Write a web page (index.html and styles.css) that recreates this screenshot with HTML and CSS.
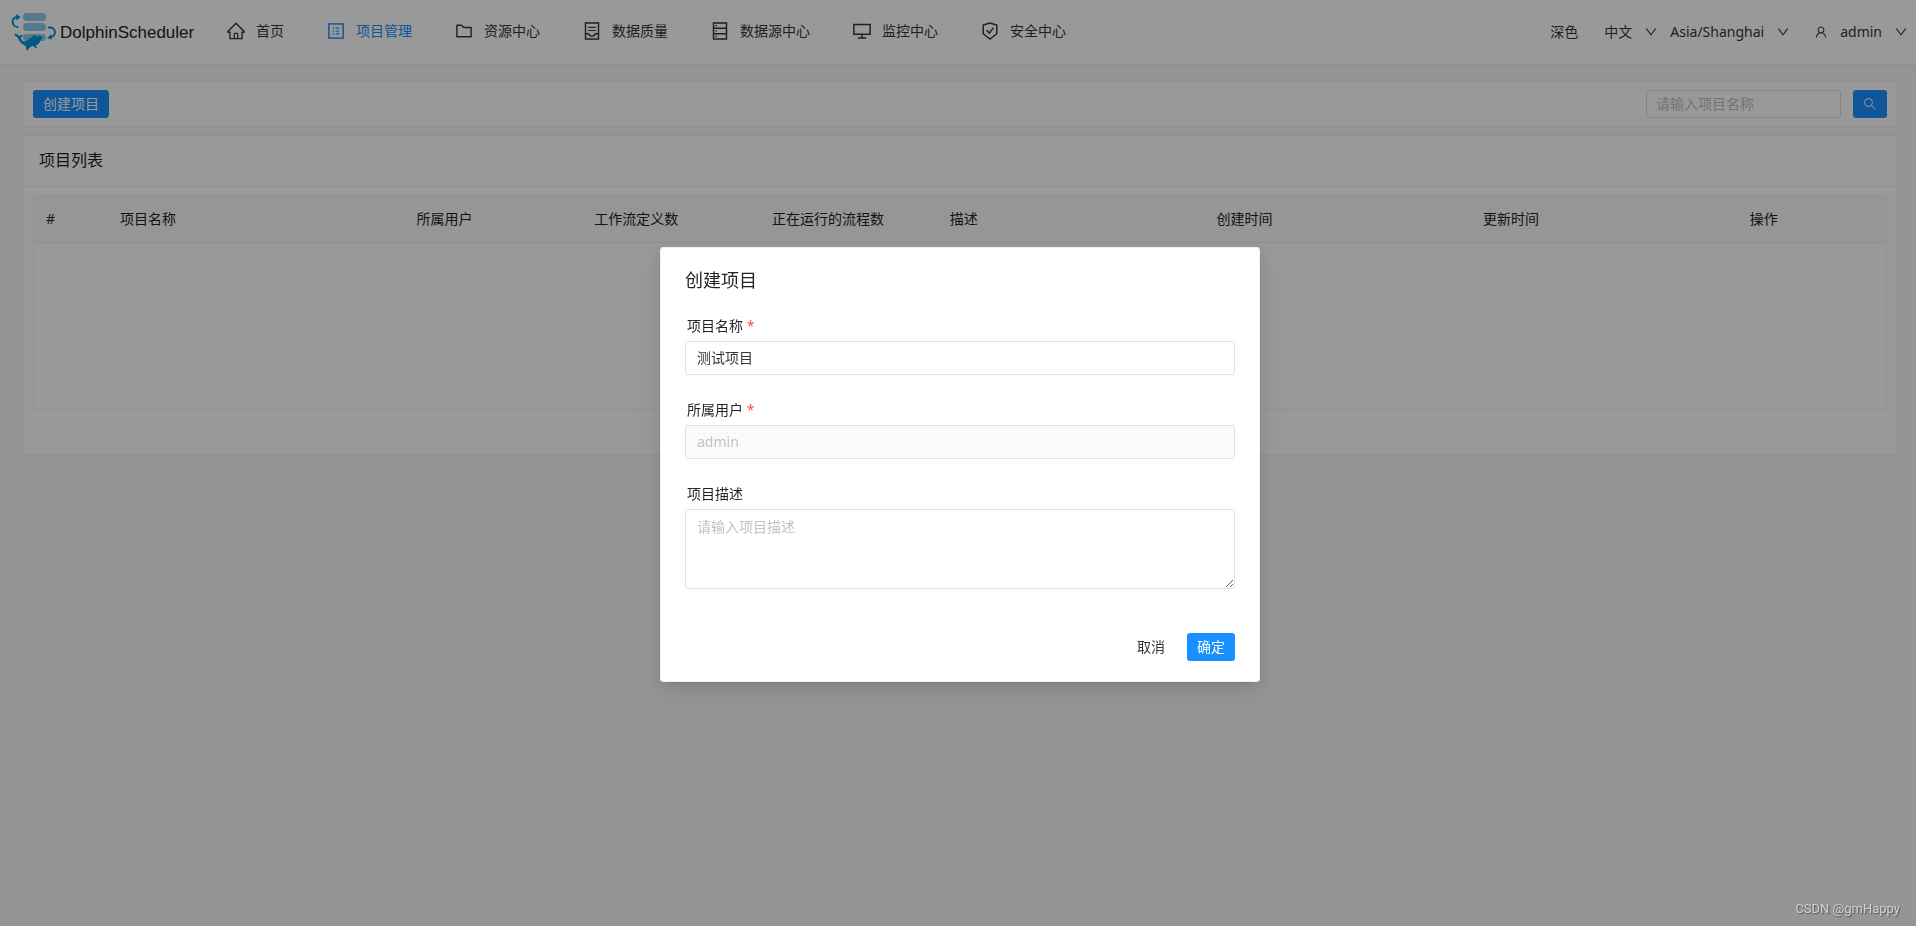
FILE: index.html
```html
<!DOCTYPE html>
<html lang="zh-CN">
<head>
<meta charset="utf-8">
<title>DolphinScheduler</title>
<link rel="stylesheet" href="styles.css">
</head>
<body>
<svg class="sprite" aria-hidden="true">
  <symbol id="i-down" viewBox="0 0 1024 1024"><path d="M884 256h-75c-5.100 0-9.900 2.500-12.900 6.600L512 654.200 227.900 262.600c-3-4.100-7.800-6.600-12.900-6.600h-75c-6.500 0-10.300 7.400-6.500 12.700l352.600 486.100c12.800 17.600 39 17.600 51.700 0l352.600-486.100c3.900-5.300.1-12.700-6.400-12.700z"/></symbol>
</svg>
<header class="header">
  <a class="logo" href="#">
    <svg class="logo-mark" viewBox="0 0 46 40" aria-hidden="true">
      <g fill="#8accef"><rect x="12" y="1" width="23" height="8" rx="4"/><rect x="12" y="11" width="23" height="8" rx="4"/><rect x="12" y="22" width="23" height="7" rx="3.500"/></g>
      <g fill="none" stroke="#0097dc" stroke-width="2"><path d="M7.500 15C1 15.500-1 6 6 5"/><path d="M37 15.500c8-1 9.500 8 2.500 10"/></g>
      <g fill="#0097dc"><path d="M5 2l4.500 3L5.500 8.500zM40.500 22l-4.500 4 4.500 1.500z"/>
      <path d="M3.200 21.500c2.300.2 4 1 4.900 2.600 1.400-1.200 3-1.500 4.400-.6-1.600.6-2.500 1.500-2.600 2.900.8 2.300 2.600 3.300 5.100 2.600 2.800-.9 3.600-2.900 6-4.300 1-.9 2.300-1.700 3.800-1.700-.3.800-.4 1.300-.3 1.800 2.300-.8 4.500-1 6-.1.600-.2 1.300 0 1.600.8-1.200.6-1.900 1.500-2.500 2.900-1 2.400-2.500 4-4.600 5l1 3c-1.700-.4-2.800-1.300-3.700-2.400-2.100.4-3.200 1-4.200 2.300l-2 2.500c-.9-1.200-1.300-2.700-1.200-4.600-4.300-2-7.200-4.800-8.200-8.700C4.700 24.800 3.700 23.400 3.200 21.500z"/></g>
    </svg>
    <span class="logo-text">DolphinScheduler</span>
  </a>
  <nav class="nav">
    <a class="nav-item" href="#"><svg class="icon" viewBox="0 0 1024 1024"><path d="M946.500 505L560.100 118.800l-25.900-25.900a31.500 31.500 0 0 0-44.400 0L77.500 505a63.900 63.900 0 0 0-18.800 46c.4 35.200 29.700 63.300 64.900 63.300h42.500V940h691.800V614.300h43.400c17.100 0 33.200-6.700 45.300-18.800a63.600 63.600 0 0 0 18.700-45.300c0-17-6.700-33.100-18.800-45.200zM568 868H456V664h112v204zm217.900-325.700V868H632V640c0-22.100-17.900-40-40-40H432c-22.100 0-40 17.900-40 40v228H238.100V542.300h-96l370-369.700 23.100 23.100L882 542.300h-96.100z"/></svg>首页</a>
    <a class="nav-item active" href="#"><svg class="icon" viewBox="0 0 1024 1024"><rect class="line" x="148" y="148" width="728" height="728"/><path d="M492 336h184v56H492zM492 484h184v56H492zM492 632h184v56H492z"/><circle cx="380" cy="364" r="40"/><circle cx="380" cy="512" r="40"/><circle cx="380" cy="660" r="40"/></svg>项目管理</a>
    <a class="nav-item" href="#"><svg class="icon" viewBox="0 0 1024 1024"><path d="M880 298.400H521L403.700 186.200a8.150 8.150 0 0 0-5.500-2.200H144c-17.700 0-32 14.300-32 32v592c0 17.700 14.300 32 32 32h736c17.700 0 32-14.300 32-32V330.400c0-17.700-14.300-32-32-32zM840 768H184V256h188.500l119.600 114.400H840V768z"/></svg>资源中心</a>
    <a class="nav-item" href="#"><svg class="icon" viewBox="0 0 1024 1024"><rect class="line" x="180" y="100" width="664" height="824"/><path class="line" d="M180 656h160c30 80 90 120 172 120s142-40 172-120h160"/><path d="M320 300h384v56H320zM320 456h384v56H320z"/></svg>数据质量</a>
    <a class="nav-item" href="#"><svg class="icon" viewBox="0 0 1024 1024"><path class="line" d="M180 100h664v824H180zM180 374h664M180 650h664"/><circle cx="312" cy="238" r="42"/><circle cx="312" cy="512" r="42"/><circle cx="312" cy="788" r="42"/></svg>数据源中心</a>
    <a class="nav-item" href="#"><svg class="icon" viewBox="0 0 1024 1024"><path class="line" d="M96 176h832v500H96zM512 676v180M300 876h424"/></svg>监控中心</a>
    <a class="nav-item" href="#"><svg class="icon" viewBox="0 0 1024 1024"><path class="line" d="M512 102L164 212v440l348 270 348-270V212z"/><path class="line" d="M340 470l140 150 210-280"/></svg>安全中心</a>
  </nav>
  <div class="tools">
    <button class="tool" type="button">深色</button>
    <button class="tool tool-lang" type="button">中文<svg class="chev"><use href="#i-down"/></svg></button>
    <button class="tool tool-zone" type="button">Asia/Shanghai<svg class="chev"><use href="#i-down"/></svg></button>
    <button class="tool tool-user" type="button"><svg class="user" viewBox="0 0 1024 1024"><path d="M858.500 763.600a374 374 0 0 0-80.600-119.500 375.630 375.630 0 0 0-119.500-80.600c-.4-.2-.8-.3-1.200-.5C719.500 518 760 444.700 760 362c0-137-111-248-248-248S264 225 264 362c0 82.700 40.500 156 102.800 201.100-.4.2-.8.3-1.200.5-44.800 18.900-85 46-119.500 80.600a375.630 375.630 0 0 0-80.600 119.500A371.700 371.700 0 0 0 136 901.800a8 8 0 0 0 8 8.200h60c4.400 0 7.900-3.500 8-7.800 2-77.200 33-149.500 87.800-204.300 56.700-56.700 132-87.900 212.200-87.900s155.500 31.200 212.200 87.900C779 752.700 810 825 812 902.200c.1 4.400 3.600 7.800 8 7.800h60a8 8 0 0 0 8-8.200c-1-47.800-10.900-94.300-29.500-138.200zM512 534c-45.900 0-89.100-17.900-121.600-50.400S340 407.900 340 362c0-45.900 17.900-89.100 50.400-121.600S466.100 190 512 190s89.100 17.900 121.600 50.400S684 316.100 684 362c0 45.900-17.900 89.100-50.400 121.600S557.900 534 512 534z"/></svg>admin<svg class="chev"><use href="#i-down"/></svg></button>
  </div>
</header>

<main class="content">
  <section class="card toolbar">
    <button class="btn primary" type="button">创建项目</button>
    <form class="search">
      <input class="input small" type="text" placeholder="请输入项目名称" aria-label="请输入项目名称">
      <button class="btn primary" type="button" aria-label="搜索"><svg class="search-icon" viewBox="0 0 14 14"><circle cx="5.500" cy="5.500" r="4"/><path d="M8.500 8.500l4 4"/></svg></button>
    </form>
  </section>
  <section class="card">
    <h2 class="card-title">项目列表</h2>
    <div class="card-body">
      <div class="table-wrap">
        <table class="table">
          <colgroup><col class="c-index"><col class="c-name"><col class="c-num"><col class="c-num"><col class="c-num"><col class="c-wide"><col class="c-wide"><col class="c-wide"><col class="c-ops"></colgroup>
          <thead><tr><th>#</th><th>项目名称</th><th>所属用户</th><th>工作流定义数</th><th>正在运行的流程数</th><th>描述</th><th>创建时间</th><th>更新时间</th><th>操作</th></tr></thead>
          <tbody><tr><td class="empty" colspan="9"></td></tr></tbody>
        </table>
      </div>
    </div>
  </section>
</main>

<div class="mask">
  <form class="modal" role="dialog" aria-labelledby="modal-title">
    <h1 class="modal-title" id="modal-title">创建项目</h1>
    <div class="field">
      <label class="label" for="name">项目名称 <span class="star">*</span></label>
      <input class="input" id="name" type="text" value="测试项目">
    </div>
    <div class="field">
      <label class="label" for="owner">所属用户 <span class="star">*</span></label>
      <input class="input" id="owner" type="text" value="admin" disabled>
    </div>
    <div class="field">
      <label class="label" for="desc">项目描述</label>
      <textarea class="input area" id="desc" placeholder="请输入项目描述"></textarea>
    </div>
    <div class="actions">
      <button class="btn plain" type="button">取消</button>
      <button class="btn primary" type="button">确定</button>
    </div>
  </form>
</div>
<div class="watermark">CSDN @gmHappy</div>
</body>
</html>
```

FILE: styles.css
```css
* { box-sizing: border-box; }

body {
  margin: 0;
  min-height: 100vh;
  background: #f8f8fc;
  color: #333639;
  font: 14px/22px "Noto Sans", "Noto Sans CJK SC", sans-serif;
}

button, input, textarea { font: inherit; color: inherit; }
button { cursor: pointer; }
svg { display: block; flex: none; fill: currentColor; }
.sprite { position: absolute; width: 0; height: 0; }

.header {
  display: flex;
  align-items: center;
  height: 65px;
  padding: 0 8px 0 11px;
  background: #fff;
  border-bottom: 1px solid #efeff5;
}

.logo { display: flex; align-items: center; gap: 3px; width: 195px; color: #333; text-decoration: none; }
.logo-mark { width: 46px; height: 40px; }
.logo-text { padding-top: 2px; font: 17px/24px "Liberation Sans", sans-serif; color: #222; }

.nav { display: flex; padding-bottom: 2px; }
.nav-item {
  display: flex;
  align-items: center;
  gap: 10px;
  padding: 0 22px 0 20px;
  color: inherit;
  text-decoration: none;
}
.nav-item.active { color: #1890ff; }
.icon { width: 20px; height: 20px; }
.line { fill: none; stroke: currentColor; stroke-width: 76; }

.tools { display: flex; align-items: center; margin-left: auto; }
.tool { display: flex; align-items: center; gap: 12px; padding: 0; border: 0; background: none; }
.tool-lang { margin-left: 26px; }
.tool-zone { margin-left: 12px; }
.tool-user { margin-left: 24px; }
.chev { width: 14px; height: 14px; }
.user { width: 14px; height: 14px; }

.content { display: grid; gap: 8px; padding: 16px 18px 16px 22px; }
.card { background: #fff; border: 1px solid #efeff5; border-radius: 3px; }
.toolbar { display: flex; align-items: center; justify-content: space-between; padding: 8px 10px; }
.search { display: flex; gap: 12px; }

.btn {
  display: flex;
  align-items: center;
  height: 28px;
  padding: 0 10px;
  border: 0;
  border-radius: 3px;
}
.primary { background: #1890ff; color: #fff; }
.plain { background: none; }
.search-icon { width: 14px; height: 14px; fill: none; stroke: currentColor; }

.input {
  display: block;
  width: 100%;
  height: 34px;
  padding: 0 11px 2px;
  background: #fff;
  border: 1px solid #e0e0e6;
  border-radius: 3px;
  outline: 0;
}
.input::placeholder { color: #c2c2c2; opacity: 1; }
.input:disabled { background: #fafafc; color: #c2c2c2; }
.small { width: 195px; height: 28px; padding: 0 9px 2px; }
.area { height: 80px; padding: 6px 11px; resize: vertical; }

.card-title { margin: 0; padding: 12px 16px 13px; font-size: 16px; line-height: 25px; font-weight: 400; color: #1f2225; border-bottom: 1px solid #efeff5; }
.card-body { padding: 8px 10px 44px; }

.table-wrap { border: 1px solid #efeff5; border-radius: 3px; overflow: hidden; }
.table { width: 100%; table-layout: fixed; border-collapse: separate; border-spacing: 0; }
.table th {
  height: 47px;
  padding: 0 12px;
  text-align: left;
  font-weight: 400;
  color: #1f2225;
  background: #fafafc;
  border-bottom: 1px solid #efeff5;
}
.c-index { width: 4%; }
.c-name { width: 16%; }
.c-num { width: 9.6%; }
.c-wide { width: 14.4%; }
.c-ops { width: 8%; }
.empty { height: 166px; padding: 0; }

.mask {
  position: fixed;
  inset: 0;
  display: flex;
  align-items: center;
  justify-content: center;
  padding: 3px 0 0 4px;
  background: rgba(0, 0, 0, .4);
}
.modal {
  width: 600px;
  padding: 19px 24px 20px;
  background: #fff;
  border: 1px solid #efeff5;
  border-radius: 3px;
  box-shadow: 0 3px 6px -4px rgba(0, 0, 0, .12), 0 6px 16px rgba(0, 0, 0, .08), 0 9px 28px 8px rgba(0, 0, 0, .05);
}
.modal-title { margin: 0 0 21px; font-size: 18px; line-height: 27px; font-weight: 400; color: #1f2225; }
.field { padding-bottom: 24px; }
.label { display: block; height: 26px; padding-left: 2px; color: #1f2225; }
.star { color: #ff4d4f; }
.actions { display: flex; justify-content: flex-end; gap: 12px; padding-top: 20px; }

.watermark {
  position: fixed;
  right: 16px;
  bottom: 8px;
  font: 13px/18px Roboto, sans-serif;
  color: #d2d2d2;
  text-shadow: 1px 1px 1px #555;
}
```
